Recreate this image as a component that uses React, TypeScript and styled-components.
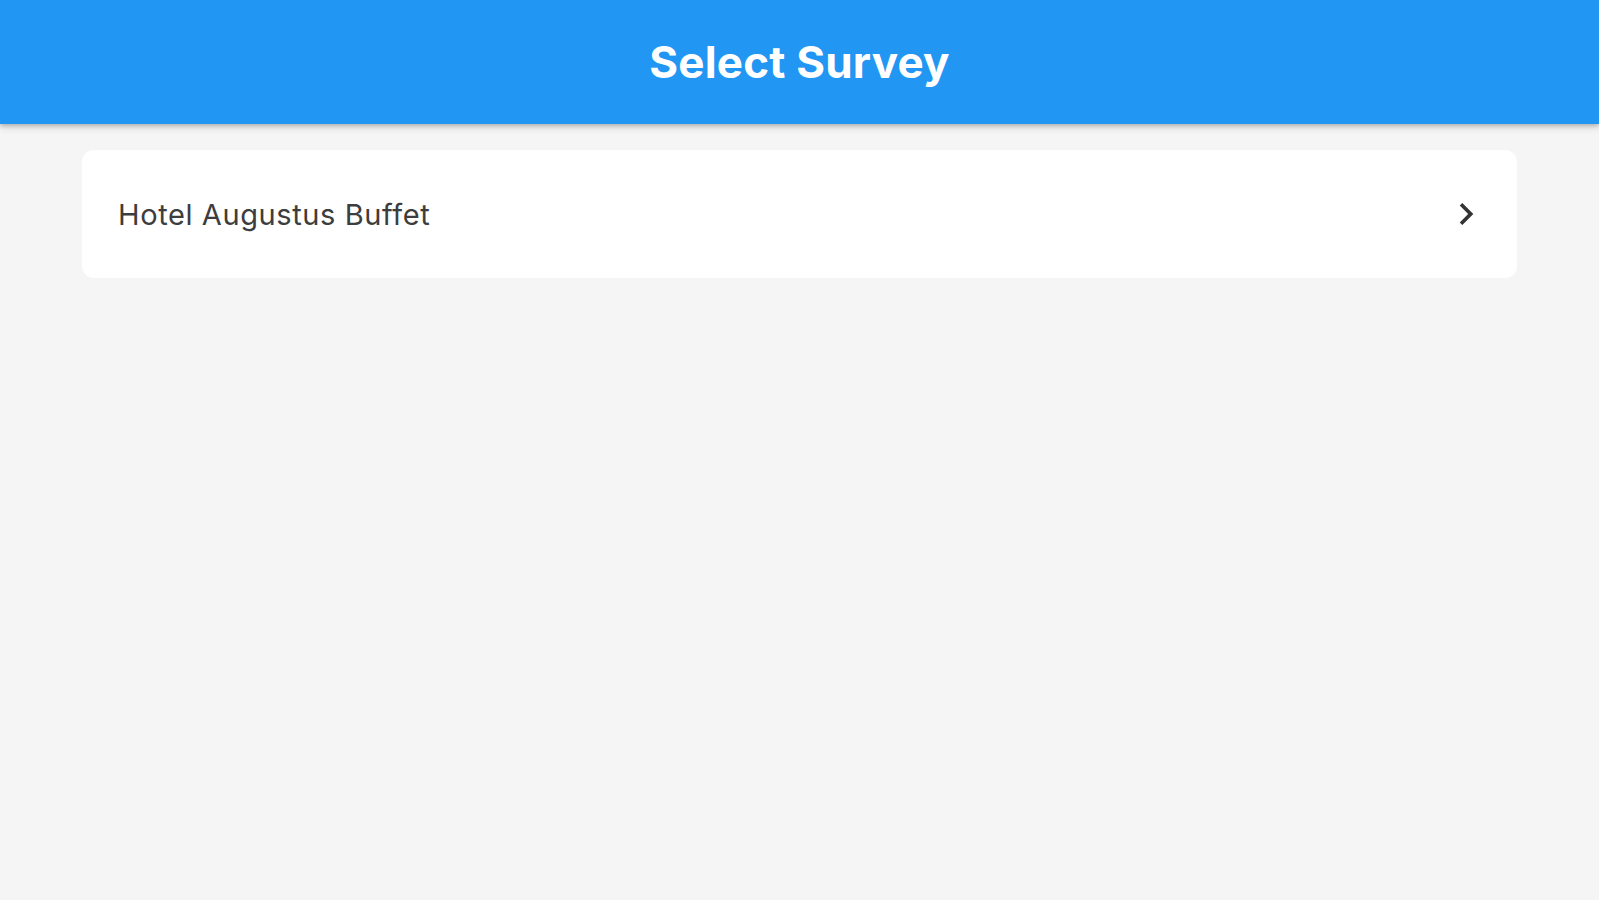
import React from "react";
import styled, { createGlobalStyle } from "styled-components";

const GlobalStyle = createGlobalStyle`
  html, body {
    margin: 0;
    padding: 0;
    background: #f5f5f5;
    font-family: Inter, "Open Sans", "Liberation Sans", sans-serif;
  }
`;

const Page = styled.div`
  min-height: 100vh;
  background: #f5f5f5;
`;

const AppBar = styled.header`
  height: 124px;
  background: #2196f3;
  display: flex;
  align-items: center;
  justify-content: center;
  box-shadow: 0 2px 4px rgba(0, 0, 0, 0.2), 0 4px 8px rgba(0, 0, 0, 0.1);
  position: relative;
  z-index: 1;
`;

const Title = styled.h1`
  margin: 0;
  color: #ffffff;
  font-size: 44px;
  font-weight: 700;
  letter-spacing: 0.2px;
`;

const List = styled.ul`
  list-style: none;
  margin: 0;
  padding: 26px 82px;
`;

const SurveyCard = styled.li`
  height: 128px;
  background: #ffffff;
  border-radius: 12px;
  display: flex;
  align-items: center;
  justify-content: space-between;
  padding: 0 29px 0 36px;
  box-sizing: border-box;
  cursor: pointer;
`;

const SurveyName = styled.span`
  font-size: 29px;
  letter-spacing: 0.6px;
  color: #3d3d3d;
`;

function ChevronRight() {
  return (
    <svg width="44" height="44" viewBox="0 0 24 24" fill="#333333">
      <path d="M10 6L8.59 7.41 13.17 12l-4.58 4.59L10 18l6-6z" />
    </svg>
  );
}

const surveys = ["Hotel Augustus Buffet"];

export default function App() {
  return (
    <Page>
      <GlobalStyle />
      <AppBar>
        <Title>Select Survey</Title>
      </AppBar>
      <List>
        {surveys.map(name => (
          <SurveyCard key={name}>
            <SurveyName>{name}</SurveyName>
            <ChevronRight />
          </SurveyCard>
        ))}
      </List>
    </Page>
  );
}
